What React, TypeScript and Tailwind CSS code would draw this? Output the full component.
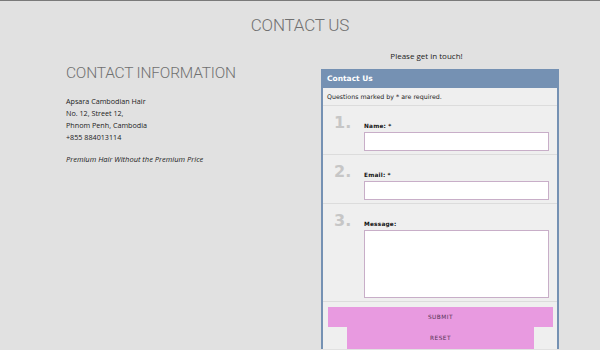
import React from 'react';

const rows = [
  { n: '1.', label: 'Name: *', area: false },
  { n: '2.', label: 'Email: *', area: false },
  { n: '3.', label: 'Message:', area: true },
];

const App: React.FC = () => {
  return (
    <div className="h-[350px] overflow-hidden bg-[#e1e1e1] border-t border-[#7a7a7a] font-['Open_Sans',sans-serif]">
      {/* Page title */}
      <h1 className="text-center pt-[14px] text-[17px] leading-[20px] font-light tracking-[-0.2px] text-[#707070] font-['Roboto',sans-serif]">
        CONTACT US
      </h1>

      <div className="flex mt-[14px]">
        {/* Left column */}
        <div className="w-[321px] pl-[66px] pt-[14px]">
          <h2 className="text-[15.5px] leading-[20px] font-light tracking-[-0.2px] text-[#707070] font-['Roboto',sans-serif]">
            CONTACT INFORMATION
          </h2>
          <div className="mt-[12px] text-[7.2px] leading-[12px] text-[#222]">
            <p>Apsara Cambodian Hair</p>
            <p>No. 12, Street 12,</p>
            <p>Phnom Penh, Cambodia</p>
            <p>+855 884013114</p>
          </div>
          <p className="mt-[10px] text-[7.5px] leading-[12px] italic text-[#222]">
            Premium Hair Without the Premium Price
          </p>
        </div>

        {/* Right column */}
        <div className="w-[238px]">
          <p className="pt-[1px] pr-[27px] text-center text-[8px] leading-[12px] text-[#222]">Please get in touch!</p>
          <div className="mt-[7px] border-x-2 border-[#7591b3] bg-[#efefef] font-['DejaVu_Sans',sans-serif]">
            <div className="h-[19px] bg-[#7591b3] pl-[4px] flex items-center text-[7.5px] font-bold text-white">
              Contact Us
            </div>
            <div className="h-[18px] flex items-center pl-[4px] text-[6.3px] text-[#222] border-b border-[#dcdcdc]">
              Questions marked by * are required.
            </div>
            {rows.map((r) => (
              <div key={r.n} className="flex border-b border-[#dcdcdc] pb-[3px]">
                <div className="w-[41px] pl-[11px] pt-[8px] text-[16px] leading-[18px] font-bold text-[#c6c6c6]">
                  {r.n}
                </div>
                <div className="flex-1 pr-[8px] pt-[16px]">
                  <div className="text-[5.8px] leading-[8px] font-bold text-[#111] tracking-[0.2px]">{r.label}</div>
                  <div
                    className={`mt-[2px] bg-white border border-[#c8aec8] ${r.area ? 'h-[68px]' : 'h-[19px]'}`}
                  />
                </div>
              </div>
            ))}
            <div className="pt-[5px] pr-[4px] pl-[5px]">
              <div className="h-[20px] bg-[#e89ae0] flex items-center justify-center text-[5.8px] tracking-[0.5px] text-[#553355]">
                SUBMIT
              </div>
              <div className="mx-[19px] h-[22px] bg-[#e89ae0] flex items-center justify-center text-[5.8px] tracking-[0.5px] text-[#553355]">
                RESET
              </div>
            </div>
          </div>
        </div>
      </div>
    </div>
  );
};

export default App;
